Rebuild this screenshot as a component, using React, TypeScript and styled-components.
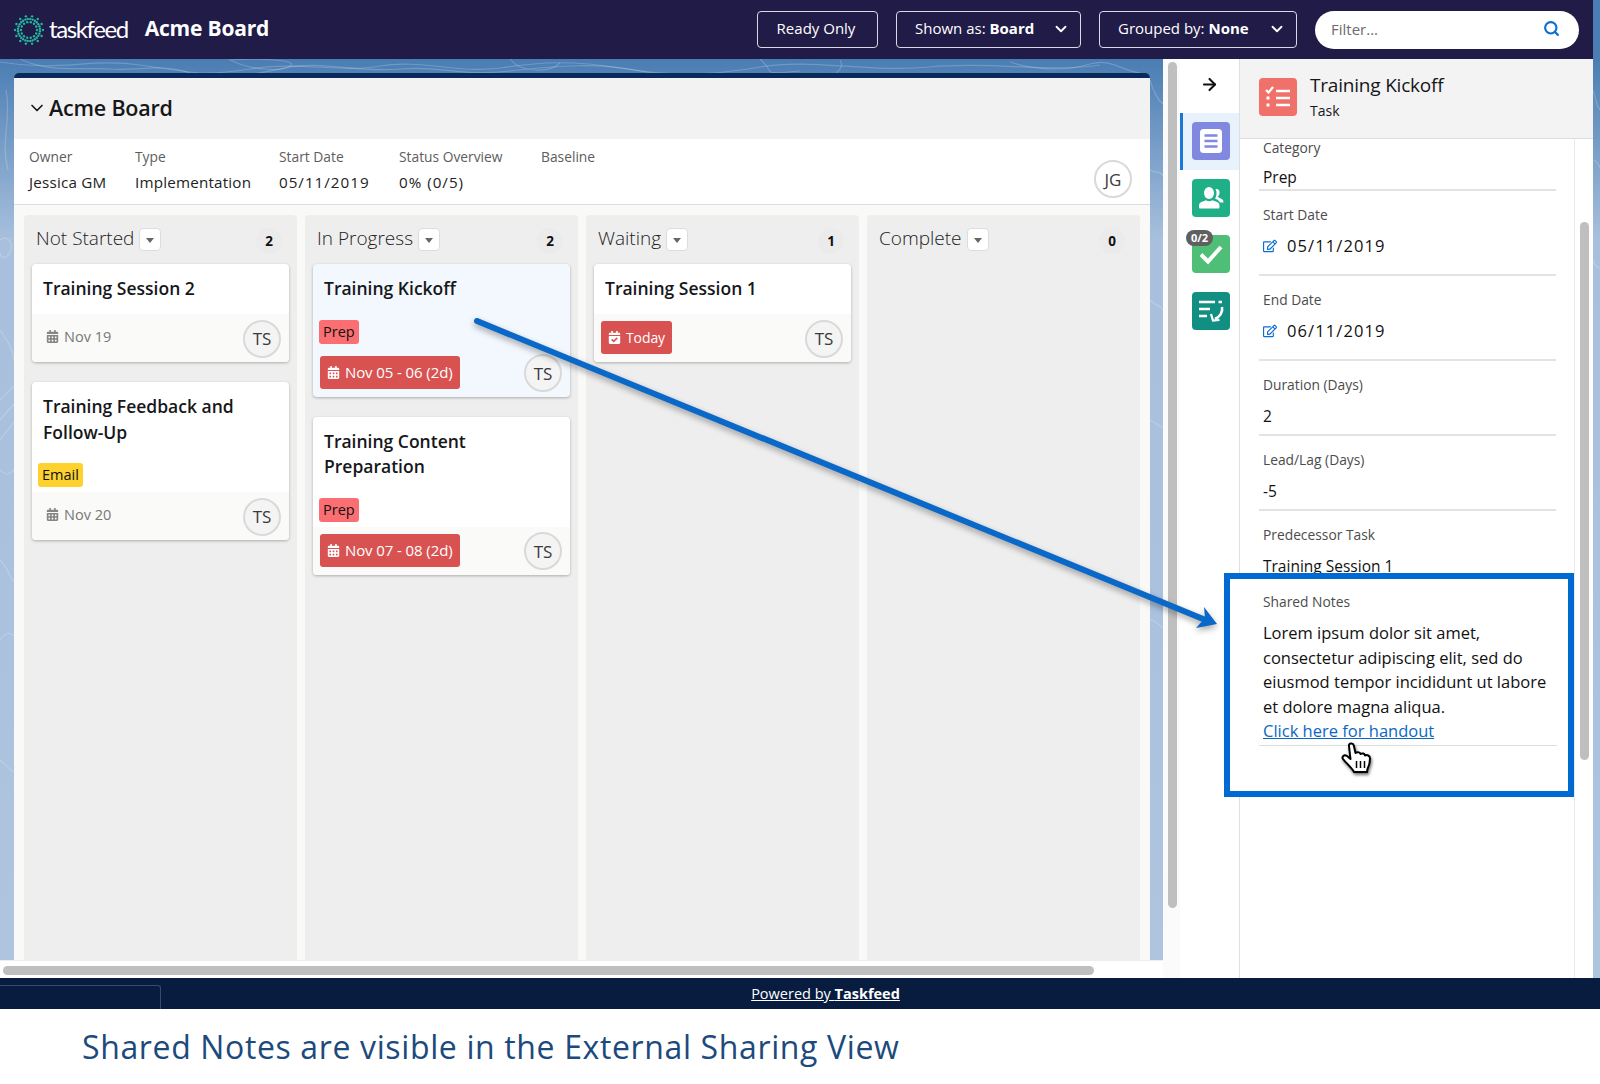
import React from 'react'
import styled, { createGlobalStyle } from 'styled-components'
import { ArrowRight, ChevronDown, Search } from 'lucide-react'
import { FaCalendarAlt, FaCalendarCheck, FaRegEdit } from 'react-icons/fa'

const FONT = `"Open Sans", Lato, Arial, sans-serif`

const GlobalStyle = createGlobalStyle`
  html, body {
    margin: 0;
    padding: 0;
    background: #fff;
    font-family: ${FONT};
    color: #16171a;
  }
  * {
    box-sizing: border-box;
  }
`

const Page = styled.div`
  position: relative;
  width: 1600px;
  height: 1084px;
  overflow: hidden;
`

const Stage = styled.div`
  position: relative;
  height: 978px;
  background: linear-gradient(to bottom, #4a7db3 59px, #a8c0dd 240px, #aec4df 100%);
`

const ContourLayer = styled.svg`
  position: absolute;
  top: 0;
  left: 0;
  fill: none;
  stroke: rgba(255, 255, 255, 0.2);
  stroke-width: 1.2;
`

const AppFrame = styled.div`
  position: relative;
  width: 1593px;
  height: 978px;
  display: flex;
  flex-direction: column;
`

const Header = styled.header`
  height: 59px;
  flex: none;
  display: flex;
  align-items: center;
  padding: 0 14px;
  background: #211b47;
  color: #fff;
`

const Brand = styled.span`
  margin-left: 5px;
  font-family: Lato, sans-serif;
  font-size: 24px;
  font-weight: 400;
  letter-spacing: -1.4px;
  position: relative;
  top: -1px;
`

const BoardName = styled.h1`
  margin: 0 0 0 17px;
  font-size: 21px;
  line-height: 26px;
  font-weight: 700;
  letter-spacing: -0.2px;
  flex: 1;
  position: relative;
  top: -2px;
`

const HeaderButton = styled.div<{ $w: number; $between?: boolean }>`
  width: ${({ $w }) => $w}px;
  height: 37px;
  margin-right: 18px;
  padding: 0 10px 3px 18px;
  display: flex;
  align-items: center;
  justify-content: ${({ $between }) => ($between ? 'space-between' : 'center')};
  border: 1px solid #d9d8e4;
  border-radius: 4px;
  font-size: 15px;
  b {
    font-weight: 700;
  }
  svg {
    position: relative;
    top: 1px;
  }
`

const ReadyButton = styled(HeaderButton)`
  padding: 0 3px 3px 0;
`

const FilterBox = styled.div`
  width: 264px;
  height: 38px;
  padding: 0 19px 2px 16px;
  display: flex;
  align-items: center;
  justify-content: space-between;
  background: #fff;
  border-radius: 19px;
  color: #6b6b6b;
  font-size: 15px;
  svg {
    color: #0b6fd0;
  }
`

const Workspace = styled.div`
  flex: 1;
  min-height: 0;
  display: flex;
`

const BoardPane = styled.div`
  width: 1163px;
  display: flex;
  flex-direction: column;
`

const BoardArea = styled.div`
  flex: 1;
  min-height: 0;
  padding: 14px 13px 0 14px;
  display: flex;
`

const Board = styled.section`
  flex: 1;
  display: flex;
  flex-direction: column;
  border-top: 5px solid #0b2a5c;
  border-radius: 5px 5px 0 0;
  background: #f9f9f8;
`

const BoardTitle = styled.div`
  height: 61px;
  flex: none;
  padding: 0 0 2px 13px;
  display: flex;
  align-items: center;
  gap: 2px;
  background: #f2f2f2;
  font-size: 21.5px;
  font-weight: 600;
  letter-spacing: -0.2px;
`

const InfoRow = styled.div`
  height: 66px;
  flex: none;
  padding: 9px 18px 0 15px;
  display: flex;
  background: #fff;
  border-bottom: 1px solid #dcdcdc;
`

const InfoItem = styled.div<{ $w: number }>`
  width: ${({ $w }) => $w}px;
`

const InfoLabel = styled.div`
  font-size: 13.8px;
  line-height: 18px;
  color: #5d5d5d;
`

const InfoValue = styled.div<{ $numeric?: boolean }>`
  margin-top: 5px;
  font-size: 15.2px;
  line-height: 22px;
  color: #222;
  letter-spacing: ${({ $numeric }) => ($numeric ? '1px' : '0.2px')};
`

const Avatar = styled.div`
  width: 38px;
  height: 38px;
  flex: none;
  display: flex;
  align-items: center;
  justify-content: center;
  border: 2px solid #d9d9d9;
  border-radius: 50%;
  background: #f4f4f4;
  font-size: 17px;
  color: #3a3a3a;
`

const OwnerAvatar = styled(Avatar)`
  margin: 12px 0 0 auto;
  background: #fff;
`

const Columns = styled.div`
  flex: 1;
  min-height: 0;
  padding: 10px 10px 0;
  display: grid;
  grid-template-columns: repeat(4, 1fr);
  gap: 8px;
`

const Column = styled.div`
  padding: 0 8px;
  background: #eeeeee;
  border-radius: 4px 4px 0 0;
`

const ColumnHead = styled.div`
  height: 49px;
  padding: 0 7px 4px 4px;
  display: flex;
  align-items: center;
  font-size: 19px;
  font-weight: 300;
  color: #222;
`

const ColumnMenu = styled.div`
  width: 22px;
  height: 23px;
  margin: 3px 0 0 5px;
  display: flex;
  align-items: center;
  justify-content: center;
  background: #fff;
  border: 1px solid #dddddd;
  border-radius: 4px;
  &::after {
    content: '';
    margin-top: 2px;
    border-left: 4px solid transparent;
    border-right: 4px solid transparent;
    border-top: 5px solid #666;
  }
`

const ColumnCount = styled.div`
  width: 26px;
  height: 26px;
  margin: 7px 0 0 auto;
  display: flex;
  align-items: center;
  justify-content: center;
  border-radius: 50%;
  background: #ebebeb;
  font-size: 13.5px;
  font-weight: 700;
  color: #111;
`

const Card = styled.article<{ $selected?: boolean }>`
  margin-bottom: 20px;
  background: ${({ $selected }) => ($selected ? '#f3f8fe' : '#fff')};
  border-radius: 4px;
  box-shadow: 0 1px 3px rgba(0, 0, 0, 0.28);
  overflow: hidden;
`

const CardBody = styled.div`
  padding: 12px 6px 5px;
  min-height: 50px;
`

const CardTitle = styled.div`
  padding: 0 5px;
  font-size: 17.5px;
  line-height: 25.5px;
  font-weight: 600;
  color: #16171a;
`

const Tag = styled.span<{ $color: string }>`
  display: inline-block;
  margin-top: 18px;
  padding: 0 4px;
  height: 24px;
  line-height: 23px;
  background: ${({ $color }) => $color};
  border-radius: 3px;
  font-size: 14.5px;
  color: #111;
`

const CardFoot = styled.div<{ $selected?: boolean }>`
  height: 48px;
  padding: 0 2px 1px 7px;
  display: flex;
  align-items: center;
  justify-content: space-between;
  background: ${({ $selected }) => ($selected ? 'transparent' : '#fafaf9')};
`

const PlainDate = styled.div`
  margin: -2px 0 0 7px;
  display: flex;
  align-items: center;
  gap: 5px;
  font-size: 14.5px;
  color: #777;
`

const DueBadge = styled.div`
  height: 33px;
  padding: 0 7px;
  display: flex;
  align-items: center;
  gap: 5px;
  background: #d85252;
  border-radius: 3px;
  font-size: 15px;
  letter-spacing: -0.1px;
  color: #fff;
`

const TodayBadge = styled(DueBadge)`
  font-size: 14px;
`

const FootAvatar = styled(Avatar)`
  margin: 2px 6px 0 0;
`

const HorizontalTrack = styled.div`
  height: 18px;
  flex: none;
  padding: 5px 69px 4px 3px;
  background: #fff;
  border-top: 1px solid #eee;
`

const ScrollThumb = styled.div`
  height: 9px;
  background: #bfbfbf;
  border-radius: 5px;
`

const VerticalTrack = styled.div`
  width: 17px;
  flex: none;
  padding: 3px 3px 70px 5px;
  background: #fbfbfb;
`

const VerticalThumb = styled.div`
  height: 100%;
  background: #bfbfbf;
  border-radius: 5px;
`

const Rail = styled.nav`
  width: 60px;
  flex: none;
  background: #fff;
  border-right: 1px solid #dfdfdf;
  display: flex;
  flex-direction: column;
`

const RailArrow = styled.div`
  height: 54px;
  padding-bottom: 4px;
  display: flex;
  align-items: center;
  justify-content: center;
  color: #111;
`

const RailItem = styled.div<{ $active?: boolean }>`
  position: relative;
  height: 56.5px;
  padding-left: 9px;
  display: flex;
  align-items: center;
  background: ${({ $active }) => ($active ? '#e8f2fc' : '#fff')};
  border-left: 3px solid ${({ $active }) => ($active ? '#1a78d6' : 'transparent')};
`

const IconTile = styled.div<{ $color: string }>`
  width: 38px;
  height: 38px;
  flex: none;
  display: flex;
  align-items: center;
  justify-content: center;
  background: ${({ $color }) => $color};
  border-radius: 4px;
`

const RailBadge = styled.div`
  position: absolute;
  left: 3px;
  top: 4px;
  width: 27px;
  height: 16px;
  line-height: 16px;
  text-align: center;
  background: #5f5f5f;
  border-radius: 8px;
  font-size: 11px;
  font-weight: 700;
  color: #fff;
`

const Detail = styled.aside`
  flex: 1;
  min-width: 0;
  display: flex;
  flex-direction: column;
  background: #fff;
`

const DetailHead = styled.div`
  height: 80px;
  flex: none;
  padding: 0 19px 4px;
  display: flex;
  align-items: center;
  gap: 13px;
  background: #f3f3f3;
  border-bottom: 1px solid #dddddd;
`

const DetailName = styled.div`
  font-size: 19px;
  line-height: 25px;
  letter-spacing: -0.2px;
`

const DetailKind = styled.div`
  margin-top: 3px;
  font-size: 14px;
  line-height: 20px;
`

const DetailMain = styled.div`
  flex: 1;
  min-height: 0;
  display: flex;
  overflow: hidden;
`

const Fields = styled.div`
  width: 335px;
  flex: none;
  margin-top: -15px;
  padding: 0 18px 0 19px;
  border-right: 1px solid #e8e8e8;
`

const FieldLabel = styled.div`
  padding-left: 4px;
  font-size: 13.8px;
  line-height: 18px;
  color: #4c4c4c;
`

const FieldValue = styled.div`
  margin-top: 9px;
  padding-left: 4px;
  display: flex;
  align-items: center;
  gap: 9px;
  font-size: 15.5px;
  line-height: 26px;
  color: #111;
  svg {
    color: #0b6fd0;
  }
`

const DateValue = styled(FieldValue)`
  gap: 10px;
  font-size: 16.5px;
  letter-spacing: 1.1px;
`

const Field = styled.div<{ $editable?: boolean }>`
  padding: 15px 0 ${({ $editable }) => ($editable ? '15px' : '5px')};
  border-bottom: 2px solid #e3e3e3;
  &:first-child {
    padding-bottom: 0;
    ${FieldValue} {
      margin-top: 8px;
      line-height: 24px;
    }
  }
`

const DetailScroll = styled.div`
  flex: 1;
  padding: 83px 4px 218px 5px;
`

const Footer = styled.footer`
  position: relative;
  height: 31px;
  display: flex;
  align-items: center;
  justify-content: center;
  padding-left: 51px;
  background: #071c3f;
`

const FooterTab = styled.div`
  position: absolute;
  left: 0;
  top: 7px;
  bottom: 0;
  width: 161px;
  border-top: 1px solid #3b4a68;
  border-right: 1px solid #3b4a68;
  border-top-right-radius: 3px;
`

const PoweredBy = styled.a`
  color: #fff;
  font-size: 14.5px;
  text-decoration: underline;
  b {
    font-weight: 700;
  }
`

const Caption = styled.div`
  height: 75px;
  padding: 18px 0 0 82px;
  font-size: 32px;
  line-height: 40px;
  letter-spacing: 0.63px;
  color: #1d4a7c;
  background: #fff;
`

const NotesBox = styled.div`
  position: absolute;
  left: 1224px;
  top: 573px;
  width: 350px;
  height: 224px;
  padding: 14px 0 0 33px;
  background: #fff;
  border: 6px solid #0069d2;
`

const NotesLabel = styled(FieldLabel)`
  padding-left: 0;
`

const NotesText = styled.div`
  margin: 10px 0 0;
  font-size: 16.5px;
  line-height: 24.6px;
  color: #111;
  white-space: nowrap;
  a {
    color: #0b67c2;
    text-decoration: underline;
  }
`

const NotesRule = styled.div`
  margin: 1px 0 0 -4px;
  width: 298px;
  height: 1px;
  background: #dedede;
`

const Overlay = styled.svg`
  position: absolute;
  top: 0;
  left: 0;
  pointer-events: none;
`

const ArrowShape = styled.g`
  filter: drop-shadow(0 3px 3px rgba(0, 0, 0, 0.35));
`

const HandShape = styled.g`
  filter: drop-shadow(1px 2px 1.5px rgba(0, 0, 0, 0.55));
`

const WHITE = '#fff'

function LogoMark() {
  const dots: React.ReactElement[] = []
  for (let i = 0; i < 14; i++) {
    const a = (i / 14) * Math.PI * 2
    const spread = [
      [14, 0],
      [11, 0.11],
      [11, -0.11],
      [8, 0],
    ]
    spread.forEach(([r, off], j) => {
      dots.push(
        <circle
          key={`${i}-${j}`}
          cx={15 + r * Math.cos(a + off)}
          cy={15 + r * Math.sin(a + off)}
          r={1.2}
          fill="#23b79f"
        />
      )
    })
  }
  return (
    <svg width="30" height="30" viewBox="0 0 30 30">
      {dots}
    </svg>
  )
}

function Contours() {
  return (
    <ContourLayer width="1600" height="978" viewBox="0 0 1600 978">
      <path d="M0 62c60 10 90-4 140 3s60 12 110 4 90 4 130-3 80 8 120 2 70-8 120 0 90 8 140-1 110 6 170 0 120 6 170-2" />
      <path d="M20 59c30 14 60 8 90 10s50-6 80 4 70 0 100-6 70 6 110 2 60 8 110 2 90-8 130 0 100 6 160 0" />
      <path d="M230 60c20 10 50 12 60 6s-30-8-60-6zM510 59c10 14 40 14 50 4M760 59c14 12 4 14 20 14M840 60c4 6 0 10-4 13M1010 62c30 10 60 8 80 2s30 6 50 9" />
      <path d="M6 90c6 30-6 50 2 80M0 240c8-6 14 4 10 12s-10 6-10 0M0 330c6 10 12 14 14 30M0 400l14-14M0 420l14-16M0 440l14-18M0 470c6 6 10 4 14 0M0 560c8 8 10 18 14 22M0 640c6-8 10-8 14-4M0 760c5 4 10 10 14 12" />
      <path d="M1150 80c4 14 8 20 13 24M1150 170c6 4 10 0 13 6M1150 300c5 6 10 4 13 10M1150 420l13 8M1150 620c6 0 10 6 13 8M1593 90c4 10 2 14 7 20M1593 160c4 0 6 6 7 8M1593 260c2 6 5 8 7 8" />
    </ContourLayer>
  )
}

function ListIcon() {
  return (
    <svg width="24" height="26" viewBox="0 0 24 26">
      <rect x="1" y="1" width="22" height="24" rx="3.5" fill={WHITE} />
      <path d="M5.500 7.500h13M5.500 13h13M5.500 18.500h13" stroke="#8088df" strokeWidth="2.6" />
    </svg>
  )
}

function PeopleIcon() {
  return (
    <svg width="26" height="26" viewBox="0 0 26 26" fill={WHITE}>
      <ellipse cx="11" cy="8" rx="5" ry="6" />
      <path d="M1 22c0-2.500 0-4 2.500-5l4.500-1.800c2 1.400 4.500 1.400 6.500 0L19 17c2.500 1 2.500 2.500 2.500 5 0 1-.5 1.500-1.500 1.500H2.500C1.500 23.500 1 23 1 22z" />
      <path d="M17.500 4c3-.5 4.500 1.500 4 4.500-.3 1.500-1 2.500-1.800 3.200l4.300 2.600c1 .7 1.500 1.800 1.500 3.200h-3.500c-1-2-3-3.300-5-4 1.500-2 2.300-6 .5-9.500z" />
    </svg>
  )
}

function CheckIcon() {
  return (
    <svg width="26" height="22" viewBox="0 0 26 22">
      <path d="M3 11.500l7 7L23 4" fill="none" stroke={WHITE} strokeWidth="4" />
    </svg>
  )
}

function PlanIcon() {
  return (
    <svg width="28" height="26" viewBox="0 0 28 26" fill="none" stroke={WHITE} strokeWidth="2.600">
      <path d="M2 4h16M21.500 4h3.500M2 11h11M2 18h8" />
      <path d="M25 9c1 5-2 10-7 12" />
      <path d="M14 16l2 6.500 6.500-.5" strokeWidth="2.200" />
    </svg>
  )
}

function TaskListIcon() {
  return (
    <svg width="28" height="26" viewBox="0 0 28 26" fill="none" stroke={WHITE} strokeWidth="2.600">
      <path d="M2 6l2.500 2.500L9 3" strokeWidth="2.200" />
      <path d="M12 7h14M12 14h14M12 21h14" />
      <path d="M2.500 14h4M2.500 21h4" strokeWidth="2.800" strokeDasharray="3 1" />
    </svg>
  )
}

type CardInfo = {
  title: string[]
  tag?: { label: string; color: string }
  date: string
  overdue?: boolean
  today?: boolean
  selected?: boolean
}

const columns: { name: string; count: number; cards: CardInfo[] }[] = [
  {
    name: 'Not Started',
    count: 2,
    cards: [
      { title: ['Training Session 2'], date: 'Nov 19' },
      {
        title: ['Training Feedback and', 'Follow-Up'],
        tag: { label: 'Email', color: '#fdd12e' },
        date: 'Nov 20',
      },
    ],
  },
  {
    name: 'In Progress',
    count: 2,
    cards: [
      {
        title: ['Training Kickoff'],
        tag: { label: 'Prep', color: '#fb6e71' },
        date: 'Nov 05 - 06 (2d)',
        overdue: true,
        selected: true,
      },
      {
        title: ['Training Content', 'Preparation'],
        tag: { label: 'Prep', color: '#fb6e71' },
        date: 'Nov 07 - 08 (2d)',
        overdue: true,
      },
    ],
  },
  {
    name: 'Waiting',
    count: 1,
    cards: [{ title: ['Training Session 1'], date: 'Today', today: true }],
  },
  { name: 'Complete', count: 0, cards: [] },
]

function CardDate({ card }: { card: CardInfo }) {
  if (card.today) {
    return (
      <TodayBadge>
        <FaCalendarCheck size={13} />
        {card.date}
      </TodayBadge>
    )
  }
  if (card.overdue) {
    return (
      <DueBadge>
        <FaCalendarAlt size={13} />
        {card.date}
      </DueBadge>
    )
  }
  return (
    <PlainDate>
      <FaCalendarAlt size={13} color="#858585" />
      {card.date}
    </PlainDate>
  )
}

function TaskCard({ card }: { card: CardInfo }) {
  return (
    <Card $selected={card.selected}>
      <CardBody>
        <CardTitle>
          {card.title.map(line => (
            <div key={line}>{line}</div>
          ))}
        </CardTitle>
        {card.tag && <Tag $color={card.tag.color}>{card.tag.label}</Tag>}
      </CardBody>
      <CardFoot $selected={card.selected}>
        <CardDate card={card} />
        <FootAvatar>TS</FootAvatar>
      </CardFoot>
    </Card>
  )
}

export default function App() {
  return (
    <Page>
      <GlobalStyle />
      <Stage>
        <Contours />
        <AppFrame>
          <Header>
            <LogoMark />
            <Brand>taskfeed</Brand>
            <BoardName>Acme Board</BoardName>
            <ReadyButton $w={121}>Ready Only</ReadyButton>
            <HeaderButton $w={185} $between>
              <span>
                Shown as: <b>Board</b>
              </span>
              <ChevronDown size={18} strokeWidth={2.4} />
            </HeaderButton>
            <HeaderButton $w={198} $between>
              <span>
                Grouped by: <b>None</b>
              </span>
              <ChevronDown size={18} strokeWidth={2.4} />
            </HeaderButton>
            <FilterBox>
              Filter...
              <Search size={17} strokeWidth={3} />
            </FilterBox>
          </Header>
          <Workspace>
            <BoardPane>
              <BoardArea>
                <Board>
                  <BoardTitle>
                    <ChevronDown size={20} strokeWidth={2} />
                    Acme Board
                  </BoardTitle>
                  <InfoRow>
                    <InfoItem $w={106}>
                      <InfoLabel>Owner</InfoLabel>
                      <InfoValue>Jessica GM</InfoValue>
                    </InfoItem>
                    <InfoItem $w={144}>
                      <InfoLabel>Type</InfoLabel>
                      <InfoValue>Implementation</InfoValue>
                    </InfoItem>
                    <InfoItem $w={120}>
                      <InfoLabel>Start Date</InfoLabel>
                      <InfoValue $numeric>05/11/2019</InfoValue>
                    </InfoItem>
                    <InfoItem $w={142}>
                      <InfoLabel>Status Overview</InfoLabel>
                      <InfoValue $numeric>0% (0/5)</InfoValue>
                    </InfoItem>
                    <InfoItem $w={100}>
                      <InfoLabel>Baseline</InfoLabel>
                    </InfoItem>
                    <OwnerAvatar>JG</OwnerAvatar>
                  </InfoRow>
                  <Columns>
                    {columns.map(column => (
                      <Column key={column.name}>
                        <ColumnHead>
                          {column.name}
                          <ColumnMenu />
                          <ColumnCount>{column.count}</ColumnCount>
                        </ColumnHead>
                        {column.cards.map(card => (
                          <TaskCard key={card.title[0]} card={card} />
                        ))}
                      </Column>
                    ))}
                  </Columns>
                </Board>
              </BoardArea>
              <HorizontalTrack>
                <ScrollThumb />
              </HorizontalTrack>
            </BoardPane>
            <VerticalTrack>
              <VerticalThumb />
            </VerticalTrack>
            <Rail>
              <RailArrow>
                <ArrowRight size={19} strokeWidth={2.6} />
              </RailArrow>
              <RailItem $active>
                <IconTile $color="#8088df">
                  <ListIcon />
                </IconTile>
              </RailItem>
              <RailItem>
                <IconTile $color="#1fb088">
                  <PeopleIcon />
                </IconTile>
              </RailItem>
              <RailItem>
                <IconTile $color="#4fbf78">
                  <CheckIcon />
                </IconTile>
                <RailBadge>0/2</RailBadge>
              </RailItem>
              <RailItem>
                <IconTile $color="#128f83">
                  <PlanIcon />
                </IconTile>
              </RailItem>
            </Rail>
            <Detail>
              <DetailHead>
                <IconTile $color="#f0706a">
                  <TaskListIcon />
                </IconTile>
                <div>
                  <DetailName>Training Kickoff</DetailName>
                  <DetailKind>Task</DetailKind>
                </div>
              </DetailHead>
              <DetailMain>
                <Fields>
                  <Field>
                    <FieldLabel>Category</FieldLabel>
                    <FieldValue>Prep</FieldValue>
                  </Field>
                  <Field $editable>
                    <FieldLabel>Start Date</FieldLabel>
                    <DateValue>
                      <FaRegEdit size={14} />
                      05/11/2019
                    </DateValue>
                  </Field>
                  <Field $editable>
                    <FieldLabel>End Date</FieldLabel>
                    <DateValue>
                      <FaRegEdit size={14} />
                      06/11/2019
                    </DateValue>
                  </Field>
                  <Field>
                    <FieldLabel>Duration (Days)</FieldLabel>
                    <FieldValue>2</FieldValue>
                  </Field>
                  <Field>
                    <FieldLabel>Lead/Lag (Days)</FieldLabel>
                    <FieldValue>-5</FieldValue>
                  </Field>
                  <Field>
                    <FieldLabel>Predecessor Task</FieldLabel>
                    <FieldValue>Training Session 1</FieldValue>
                  </Field>
                </Fields>
                <DetailScroll>
                  <VerticalThumb />
                </DetailScroll>
              </DetailMain>
            </Detail>
          </Workspace>
        </AppFrame>
      </Stage>
      <Footer>
        <FooterTab />
        <PoweredBy>
          Powered by <b>Taskfeed</b>
        </PoweredBy>
      </Footer>
      <Caption>Shared Notes are visible in the External Sharing View</Caption>
      <NotesBox>
        <NotesLabel>Shared Notes</NotesLabel>
        <NotesText>
          Lorem ipsum dolor sit amet,
          <br />
          consectetur adipiscing elit, sed do
          <br />
          eiusmod tempor incididunt ut labore
          <br />
          et dolore magna aliqua.
          <br />
          <a>Click here for handout</a>
        </NotesText>
        <NotesRule />
      </NotesBox>
      <Overlay width="1600" height="1084" viewBox="0 0 1600 1084">
        <ArrowShape>
          <path d="M477 321L1208 621" stroke="#0a68c8" strokeWidth="6" strokeLinecap="round" />
          <path d="M1204 607L1217 624L1196 628L1205 618Z" fill="#0a68c8" />
        </ArrowShape>
        <HandShape transform="translate(1341 742)">
          <path
            d="M9 13L8 4C7.700 1 12 .5 12.800 3.500L14.500 11C17 9.500 19 10.500 19.500 12C21.500 10.800 23.500 11.500 24 13.500C26 12.500 29 13.500 29 16.500C29 20 28 24 26.500 27L26 30L13 30C11 26 5 21 2 17C.5 15 3 12 6 14L9.500 17Z"
            fill="#fff"
            stroke="#000"
            strokeWidth="2"
            strokeLinejoin="round"
          />
          <path d="M15.500 19v7M19.500 19v7M23.500 19v7" stroke="#000" strokeWidth="1.500" />
        </HandShape>
      </Overlay>
    </Page>
  )
}
